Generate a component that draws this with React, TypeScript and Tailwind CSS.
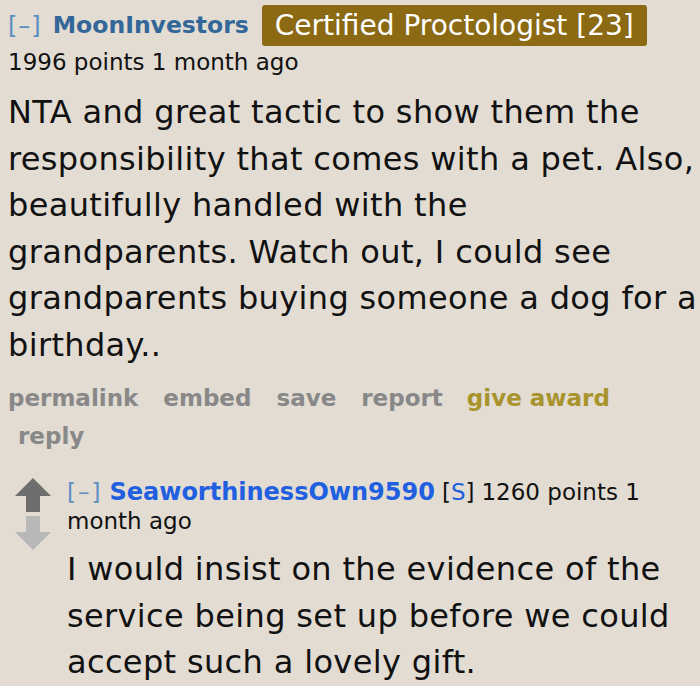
import React from "react";

const font = { fontFamily: '"DejaVu Sans", Verdana, sans-serif' };

export default function App() {
  return (
    <div className="w-[700px] h-[686px] bg-[#e2dcd3] overflow-hidden text-[#111]" style={font}>
      <div className="pl-[8px] pt-[5px]">
        <div className="flex items-center h-[41px]">
          <span className="text-[24px] text-[#5b8ec2] tracking-[1px]">[–]</span>
          <span className="ml-[11px] text-[23.5px] font-bold text-[#336699]">MoonInvestors</span>
          <span className="ml-[13px] bg-[#8b6a13] text-white text-[28px] leading-[41px] px-[13px] rounded-[3px]">
            Certified Proctologist [23]
          </span>
        </div>
        <div className="text-[23px] leading-[32px] mt-[0px]">1996 points 1 month ago</div>
        <div className="text-[32px] leading-[46.5px] tracking-[0.35px] mt-[11px] pr-[2px]">
          NTA and great tactic to show them the responsibility that comes with a pet. Also, beautifully handled with the grandparents. Watch out, I could see grandparents buying someone a dog for a birthday..
        </div>
        <div className="flex flex-wrap text-[23px] font-bold text-[#888888] mt-[11px] leading-[38px] w-[640px]">
          <span className="mr-[25px]">permalink</span>
          <span className="mr-[25px]">embed</span>
          <span className="mr-[25px]">save</span>
          <span className="mr-[24px]">report</span>
          <span className="text-[#a8932c]">give award</span>
          <span className="ml-[10px]">reply</span>
        </div>
        <div className="flex mt-[23px]">
          <div className="w-[59px] flex flex-col items-start pl-[7px] pt-[0px]">
            <svg width="36" height="72" viewBox="0 0 36 72">
              <path d="M18 0 L36 18 L25 18 L25 34 L11 34 L11 18 L0 18 Z" fill="#6e6e6e" />
              <path d="M11 38 L25 38 L25 54 L36 54 L18 72 L0 54 L11 54 Z" fill="#b8b8b8" />
            </svg>
          </div>
          <div className="flex-1">
            <div className="flex items-baseline text-[23px] leading-[29px] whitespace-nowrap">
              <span className="text-[#5b8ec2] tracking-[2px]">[–]</span>
              <span className="ml-[7px] font-bold text-[#1f5fe0] text-[24px]">SeaworthinessOwn9590</span>
              <span className="ml-[7px]">[<span className="text-[#1f5fe0]">S</span>]</span>
              <span className="ml-[7px]">1260 points 1</span>
            </div>
            <div className="text-[23px] leading-[29px]">month ago</div>
            <div className="text-[32px] leading-[46.5px] tracking-[0.35px] mt-[10px]">
              I would insist on the evidence of the service being set up before we could accept such a lovely gift.
            </div>
          </div>
        </div>
      </div>
    </div>
  );
}
